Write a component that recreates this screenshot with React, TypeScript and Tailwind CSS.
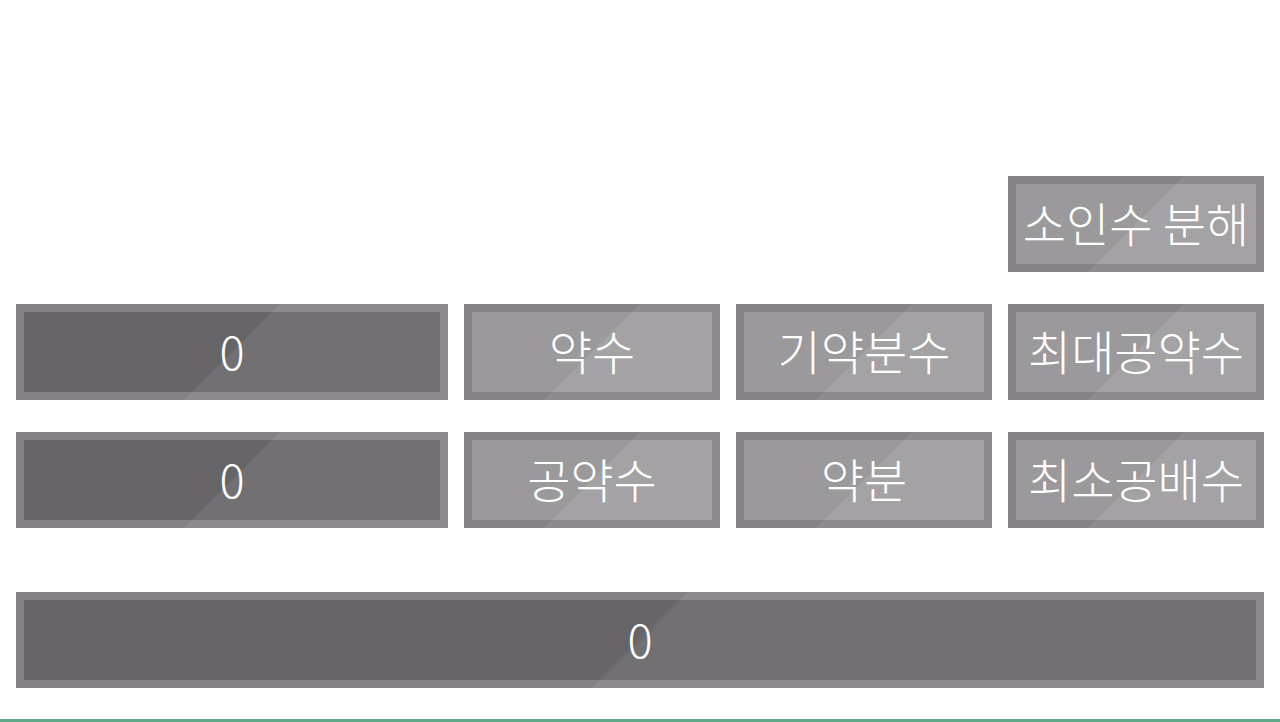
import React from 'react';

const font = { fontFamily: '"Noto Sans CJK KR", "Noto Sans", sans-serif' };

type Kind = 'key' | 'display';

function Tile({ label, kind = 'key', className = '' }: { label: string; kind?: Kind; className?: string }) {
  const outer =
    kind === 'key'
      ? 'bg-[linear-gradient(135deg,#858386_50%,#8d8b8e_50%)]'
      : 'bg-[linear-gradient(135deg,#828083_50%,#8c8a8d_50%)]';
  const inner =
    kind === 'key'
      ? 'bg-[linear-gradient(135deg,#9b999c_49.6%,#a4a2a5_50.4%)]'
      : 'bg-[linear-gradient(135deg,#666467_49.6%,#727073_50.4%)]';
  return (
    <div className={`h-24 p-2 ${outer} ${className}`}>
      <div
        className={`flex h-full items-center justify-center pb-[6px] text-[47px] font-light leading-none text-white ${inner}`}
        style={font}
      >
        {label}
      </div>
    </div>
  );
}

export default function App() {
  return (
    <div className="flex h-[722px] w-[1280px] flex-col bg-white">
      <div className="px-4 pt-[176px]">
        <div className="grid grid-cols-[432px_256px_256px_256px] gap-x-4">
          <Tile label="소인수 분해" className="col-start-4" />
        </div>
        <div className="mt-8 grid grid-cols-[432px_256px_256px_256px] gap-x-4">
          <Tile label="0" kind="display" />
          <Tile label="약수" />
          <Tile label="기약분수" />
          <Tile label="최대공약수" />
        </div>
        <div className="mt-8 grid grid-cols-[432px_256px_256px_256px] gap-x-4">
          <Tile label="0" kind="display" />
          <Tile label="공약수" />
          <Tile label="약분" />
          <Tile label="최소공배수" />
        </div>
        <div className="mt-16">
          <Tile label="0" kind="display" />
        </div>
      </div>
      <div className="mt-auto h-[3px] bg-[#5fa98a]" />
    </div>
  );
}
